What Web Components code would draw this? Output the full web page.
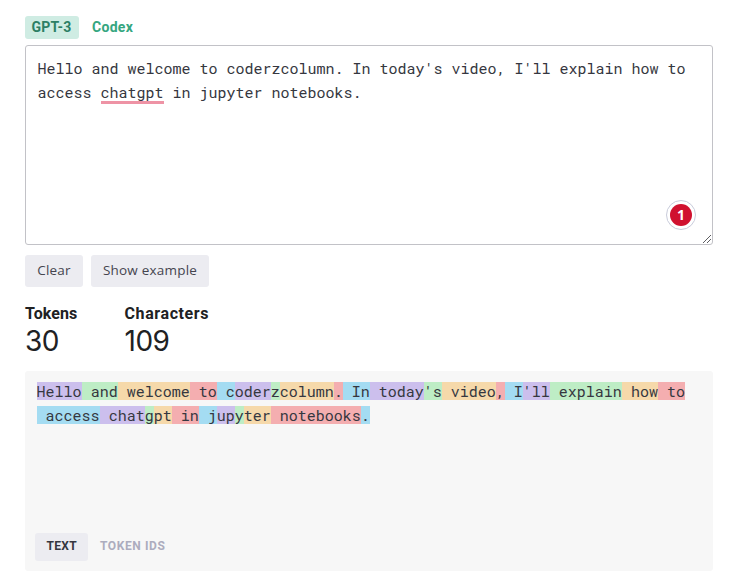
<!DOCTYPE html>
<html lang="en"><head><meta charset="utf-8"><title>Tokenizer</title>
<style>body{margin:0;background:#fff;overflow:hidden}</style></head>
<body><tokenizer-page></tokenizer-page>
<script>
const define=(name,html,setup)=>customElements.define(name,class extends HTMLElement{
  connectedCallback(){
    if(this.shadowRoot)return;
    this.attachShadow({mode:'open'}).innerHTML=html;
    if(setup)setup(this,this.shadowRoot);
  }
});
define('model-tab',`<style>
:host{display:block;box-sizing:border-box;height:23px;padding:0 7px;border-radius:3px;font:700 14px/23px Roboto,sans-serif;letter-spacing:.3px;color:#35a680;white-space:nowrap}
:host([active]){padding:0 6.5px;letter-spacing:.2px;background:#cfece3;color:#2c7f65}
</style><slot></slot>`);
define('ui-button',`<style>
:host{display:block;box-sizing:border-box;height:32px;border-radius:3px;background:#ececf1;color:#45454f;font:400 13.5px/31px "Open Sans",sans-serif;letter-spacing:.2px;white-space:nowrap;text-align:center}
</style><slot></slot>`);
define('stat-item',`<style>
:host{display:block;color:#202123;white-space:nowrap}
.l{font:700 16px/25px Roboto,sans-serif;letter-spacing:var(--track,.1px)}
.v{font:400 28px/31px Inter,sans-serif;letter-spacing:-.5px}
</style><div class="l"><slot name="label"></slot></div><div class="v"><slot></slot></div>`);
define('issue-badge',`<style>
:host{display:grid;place-items:center;box-sizing:border-box;width:30px;height:30px;border:1px solid #c9ccdb;border-radius:50%;background:#fff}
span{width:22px;height:22px;border-radius:50%;background:#d0112f;color:#fff;text-align:center;font:700 14px/22px "Open Sans",sans-serif}
</style><span><slot></slot></span>`);
define('text-input',`<style>
:host{display:block;position:relative;box-sizing:border-box;height:200px;border:1px solid #c2c2c7;border-radius:3px;padding:10px 11.5px;background:#fff;color:#353740;font:15px/24px "Roboto Mono","Liberation Mono",monospace}
issue-badge{position:absolute;right:16px;bottom:14px}
svg{position:absolute;right:0;bottom:0}
</style><slot></slot><issue-badge>1</issue-badge>
<svg width="10" height="10" viewBox="0 0 10 10" stroke="#5d5d61" stroke-width="1"><path d="M1 9L9 1M5 9L9 5"/></svg>`);
define('spell-mark',`<style>:host{display:inline-block;height:18px;line-height:18px;box-shadow:0 3px #ee93a5}</style><slot></slot>`);
define('token-span',`<style>
:host{display:inline-block;height:18px;line-height:19px;white-space:pre;background:var(--tone)}
</style><slot></slot>`);
define('view-tab',`<style>
:host{display:block;box-sizing:border-box;height:28px;padding:0 12px;border-radius:3px;font:700 12px/27px Roboto,sans-serif;letter-spacing:.6px;color:#acacbe;white-space:nowrap}
:host([active]){width:53px;padding:0 11.5px;letter-spacing:.3px;background:#ececf1;color:#353740}
</style><slot></slot>`);
define('token-output',`<style>
:host{display:flex;flex-direction:column;justify-content:space-between;box-sizing:border-box;height:200px;padding:8px 12px 10px;border-radius:3px;background:#f7f7f7;color:#353740}
.t{font:15px/24px "Roboto Mono","Liberation Mono",monospace;margin-left:-.4px}
.tabs{display:flex;margin-left:-2px}
</style><div class="t"></div><div class="tabs"><view-tab active>TEXT</view-tab><view-tab>TOKEN IDS</view-tab></div>`,(el,root)=>{
  const tokens=["Hello"," and"," welcome"," to"," c","oder","z","column","."," In"," today","'s"," video",","," I","'ll"," explain"," how"," to"," access"," chat","g","pt"," in"," j","up","y","ter"," notebooks","."];
  const tones=['rgba(107,64,216,.3)','rgba(104,222,122,.4)','rgba(244,172,54,.4)','rgba(239,65,70,.4)','rgba(39,181,234,.4)'];
  tokens.forEach((t,i)=>{
    const s=document.createElement('token-span');
    s.textContent=t;s.style.setProperty('--tone',tones[i%5]);
    root.querySelector('.t').append(s);
  });
});
define('tokenizer-page',`<style>
:host{display:flow-root;box-sizing:border-box;width:734px;height:573px;padding:16px 21px 0 25px}
.models{display:flex;gap:6px;margin-bottom:6px}
.models>:first-child{width:54px}
.buttons{display:flex;gap:8px;margin:10px 0 14px}
.clear{width:58px}.example{width:118px}
.stats{display:flex;margin-bottom:14px}
.stats>:first-child{width:99.5px}
.stats>:last-child{--track:.6px}
</style>
<div class="models"><model-tab active>GPT-3</model-tab><model-tab>Codex</model-tab></div>
<text-input><div>Hello and welcome to coderzcolumn. In today's video, I'll explain how to</div><div>access <spell-mark>chatgpt</spell-mark> in jupyter notebooks.</div></text-input>
<div class="buttons"><ui-button class="clear">Clear</ui-button><ui-button class="example">Show example</ui-button></div>
<div class="stats"><stat-item><span slot="label">Tokens</span>30</stat-item><stat-item><span slot="label">Characters</span>109</stat-item></div>
<token-output></token-output>`);
</script></body></html>
